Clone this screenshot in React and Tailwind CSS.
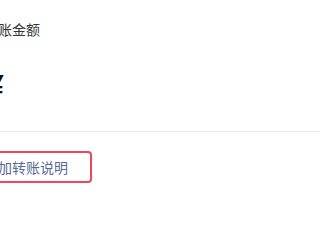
export default function App() {
  return (
    <div className="w-[320px] h-[200px] bg-white overflow-hidden" style={{ fontFamily: '"Noto Sans CJK SC", "Liberation Sans", sans-serif' }}>
      <div className="-ml-[16px] w-[336px] flex flex-col">
        <div className="pt-[19px] text-[14px] leading-[20px] text-[#353535]">转账金额</div>
        <div className="mt-[29px] ml-[2px] h-[36px] flex items-center text-[32px] font-bold leading-[36px] text-[#111]" style={{ fontFamily: '"Liberation Sans", sans-serif' }}>¥</div>
        <div className="mt-[27px] h-px bg-[#ececec]" />
        <div className="mt-[19px] flex">
          <div className="-ml-[8px] h-[32px] w-[116px] border-2 border-[#f2435a] rounded-[4px] flex items-center pl-[6px] text-[14px] text-[#576b95]">
            添加转账说明
          </div>
        </div>
      </div>
    </div>
  );
}
